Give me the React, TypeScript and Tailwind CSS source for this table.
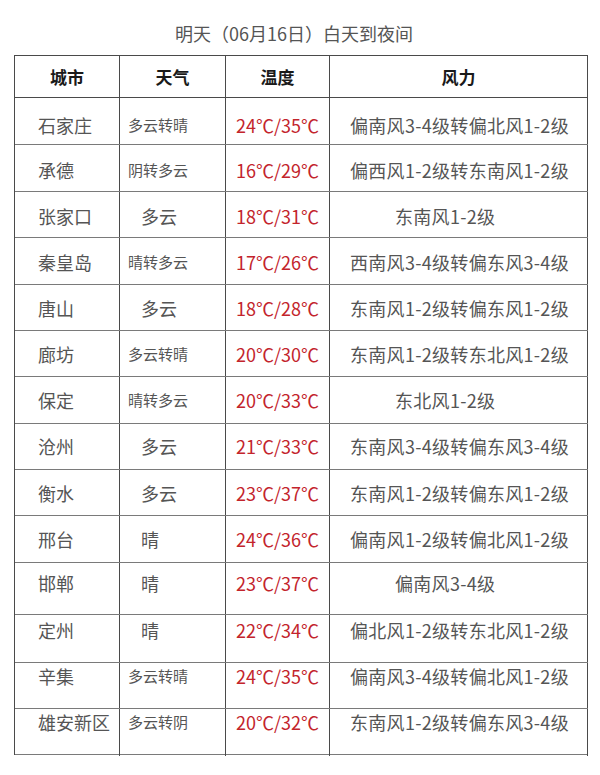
import React from 'react';

interface Row {
  city: string;
  weather: string;
  temp: string;
  wind: string;
  h: string; // row height
  pad: string; // vertical nudge of the text inside each cell
}

const rows: Row[] = [
  { city: '石家庄', weather: '多云转晴', temp: '24℃/35℃', wind: '偏南风3-4级转偏北风1-2级', h: 'h-[47px]', pad: 'pt-[9px]' },
  { city: '承德', weather: '阴转多云', temp: '16℃/29℃', wind: '偏西风1-2级转东南风1-2级', h: 'h-[47px]', pad: 'pt-[5px]' },
  { city: '张家口', weather: '多云', temp: '18℃/31℃', wind: '东南风1-2级', h: 'h-[46px]', pad: 'pt-[4px]' },
  { city: '秦皇岛', weather: '晴转多云', temp: '17℃/26℃', wind: '西南风3-4级转偏东风3-4级', h: 'h-[47px]', pad: 'pt-[3px]' },
  { city: '唐山', weather: '多云', temp: '18℃/28℃', wind: '东南风1-2级转偏东风1-2级', h: 'h-[46px]', pad: 'pt-[2px]' },
  { city: '廊坊', weather: '多云转晴', temp: '20℃/30℃', wind: '东南风1-2级转东北风1-2级', h: 'h-[46px]', pad: 'pt-[2px]' },
  { city: '保定', weather: '晴转多云', temp: '20℃/33℃', wind: '东北风1-2级', h: 'h-[47px]', pad: '' },
  { city: '沧州', weather: '多云', temp: '21℃/33℃', wind: '东南风3-4级转偏东风3-4级', h: 'h-[46px]', pad: '' },
  { city: '衡水', weather: '多云', temp: '23℃/37℃', wind: '东南风1-2级转偏东风1-2级', h: 'h-[46px]', pad: 'pt-[2px]' },
  { city: '邢台', weather: '晴', temp: '24℃/36℃', wind: '偏南风1-2级转偏北风1-2级', h: 'h-[47px]', pad: '' },
  { city: '邯郸', weather: '晴', temp: '23℃/37℃', wind: '偏南风3-4级', h: 'h-[52px]', pad: 'pb-[10px]' },
  { city: '定州', weather: '晴', temp: '22℃/34℃', wind: '偏北风1-2级转东北风1-2级', h: 'h-[48px]', pad: 'pb-[16px]' },
  { city: '辛集', weather: '多云转晴', temp: '24℃/35℃', wind: '偏南风3-4级转偏北风1-2级', h: 'h-[46px]', pad: 'pb-[18px]' },
  { city: '雄安新区', weather: '多云转阴', temp: '20℃/32℃', wind: '东南风1-2级转偏东风3-4级', h: 'h-[46px]', pad: 'pb-[20px]' },
];

const font = "font-['Noto_Sans_CJK_SC','Noto_Sans',sans-serif]";
const cols = 'grid grid-cols-[105px_106px_104px_258px]';
const cell = 'flex items-center border-r border-[#4a4a4a] whitespace-nowrap';

export default function App() {
  return (
    <div className={`w-[600px] h-[775px] bg-white ${font}`}>
      {/* 标题 */}
      <div className="h-[55px] flex items-center justify-center pt-[11px] pr-[12px] text-[18px] text-[#555]">
        明天（06月16日）白天到夜间
      </div>

      {/* 表格 */}
      <div className="ml-[14px] w-[574px] border-l border-t border-[#4a4a4a]">
        <div className={`${cols} h-[42px] text-[17px] font-bold text-[#1a1a1a]`}>
          {['城市', '天气', '温度', '风力'].map((h) => (
            <div key={h} className="flex items-center justify-center border-r border-b border-[#4a4a4a]">
              {h}
            </div>
          ))}
        </div>

        {rows.map((r) => (
          <div key={r.city} className={`${cols} ${r.h} border-b border-[#7a7a7a]`}>
            <div className={`${cell} ${r.pad} pl-[23px] text-[18px] text-[#555]`}>{r.city}</div>
            <div
              className={`${cell} ${r.pad} ${
                r.weather.length > 2 ? 'pl-[8px] text-[15px]' : 'pl-[21px] text-[18px]'
              } text-[#555]`}
            >
              {r.weather}
            </div>
            <div className={`${cell} ${r.pad} justify-center text-[18px] text-[#c3242c]`}>{r.temp}</div>
            <div
              className={`${cell} ${r.pad} ${
                r.wind.length > 8 ? 'pl-[20px]' : 'pl-[65px]'
              } text-[18px] tracking-[0.3px] text-[#555]`}
            >
              {r.wind}
            </div>
          </div>
        ))}
      </div>
    </div>
  );
}
